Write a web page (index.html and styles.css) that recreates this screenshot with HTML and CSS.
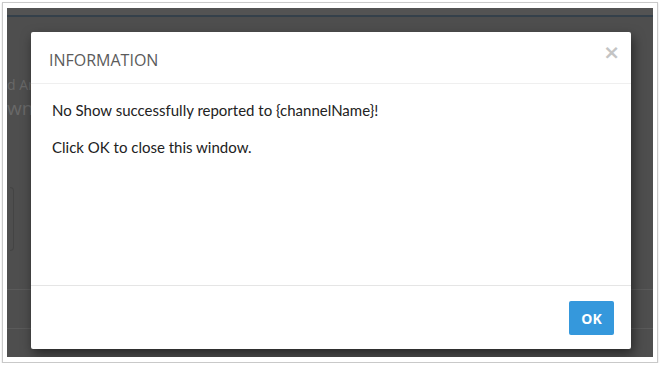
FILE: index.html
```html
<!DOCTYPE html>
<html lang="en">
<head>
    <meta charset="UTF-8">
    <meta name="viewport" content="width=device-width, initial-scale=1.0">
    <title>Information</title>
    <link rel="stylesheet" href="styles.css">
</head>
<body>

    <div class="frame">
        <div class="screen">
            <div class="topbar"></div>
            <div class="page">
                <div class="page-text small">d Ar</div>
                <div class="page-text big">wn</div>
                <div class="page-handle"></div>
                <div class="page-rows">
                    <div class="page-row"></div>
                    <div class="page-row"></div>
                </div>
            </div>

            <div class="modal">
                <div class="modal-header">
                    <h4 class="modal-title">INFORMATION</h4>
                    <span class="close">&times;</span>
                </div>
                <div class="modal-body">
                    <p>No Show successfully reported to {channelName}!</p>
                    <p>Click OK to close this window.</p>
                </div>
                <div class="modal-footer">
                    <button class="btn-ok">OK</button>
                </div>
            </div>
        </div>
    </div>

</body>
</html>
```

FILE: styles.css
```css
body {
    margin: 0;
    background-color: #fff;
    font-family: "Open Sans", sans-serif;
}
.frame {
    margin: 2px 0 0 2px;
    width: 656px;
    box-sizing: border-box;
    border: 1px solid #c9c9c9;
    padding: 5px 4px 5px 4px;
    box-shadow: 0 1px 2px rgba(0, 0, 0, 0.15);
}
.screen {
    position: relative;
    height: 349px;
    overflow: hidden;
    background-color: #4e4e4e;
}
.topbar {
    height: 7px;
    background-color: #535353;
    border-bottom: 2px solid #34404a;
}
.page {
    height: 340px;
}
.page-text {
    color: #686868;
    white-space: nowrap;
    font-family: "Open Sans", sans-serif;
}
.page-text.small {
    margin-top: 60px;
    margin-bottom: 6px;
    font-size: 14px;
    line-height: 16px;
}
.page-text.big {
    font-size: 19px;
    line-height: 18px;
}
.page-handle {
    margin: 70px 0 0 3px;
    width: 3px;
    height: 62px;
    border: 1px solid #444;
    border-left: none;
    border-radius: 0 4px 4px 0;
}
.page-rows {
    margin-top: 38px;
}
.page-row {
    height: 38px;
    border-top: 1px solid #5a5a5a;
}

/* modal over the dimmed page */
.modal {
    position: absolute;
    left: 24px;
    top: 24px;
    width: 600px;
    height: 317px;
    display: flex;
    flex-direction: column;
    background-color: #fff;
    border-radius: 2px;
    box-shadow: 2px 5px 12px rgba(0, 0, 0, 0.5);
}
.modal-header {
    height: 52px;
    box-sizing: border-box;
    padding: 17px 11px 0 18px;
    border-bottom: 1px solid #efefef;
    display: flex;
    justify-content: space-between;
    align-items: flex-start;
}
.modal-title {
    margin: 0;
    font-size: 16px;
    font-weight: normal;
    line-height: 22px;
    color: #5b5b5b;
}
.close {
    margin-top: -7px;
    font-size: 20px;
    font-weight: bold;
    line-height: 20px;
    color: #c4c4c4;
    font-family: "DejaVu Sans", sans-serif;
}
.modal-body {
    flex: 1;
    padding: 16px 21px 0 21px;
    font-family: Lato, sans-serif;
    font-size: 15px;
    color: #222;
}
.modal-body p {
    margin: 0 0 17px 0;
    line-height: 20px;
}
.modal-footer {
    height: 64px;
    box-sizing: border-box;
    border-top: 1px solid #e5e5e5;
    padding: 15px 17px 0 0;
    display: flex;
    justify-content: flex-end;
    align-items: flex-start;
}
.btn-ok {
    width: 45px;
    height: 34px;
    padding: 0;
    background-color: #3598dc;
    color: #fff;
    border: none;
    border-radius: 2px;
    font-family: "Open Sans", sans-serif;
    font-size: 14px;
    font-weight: bold;
    cursor: pointer;
}
```
